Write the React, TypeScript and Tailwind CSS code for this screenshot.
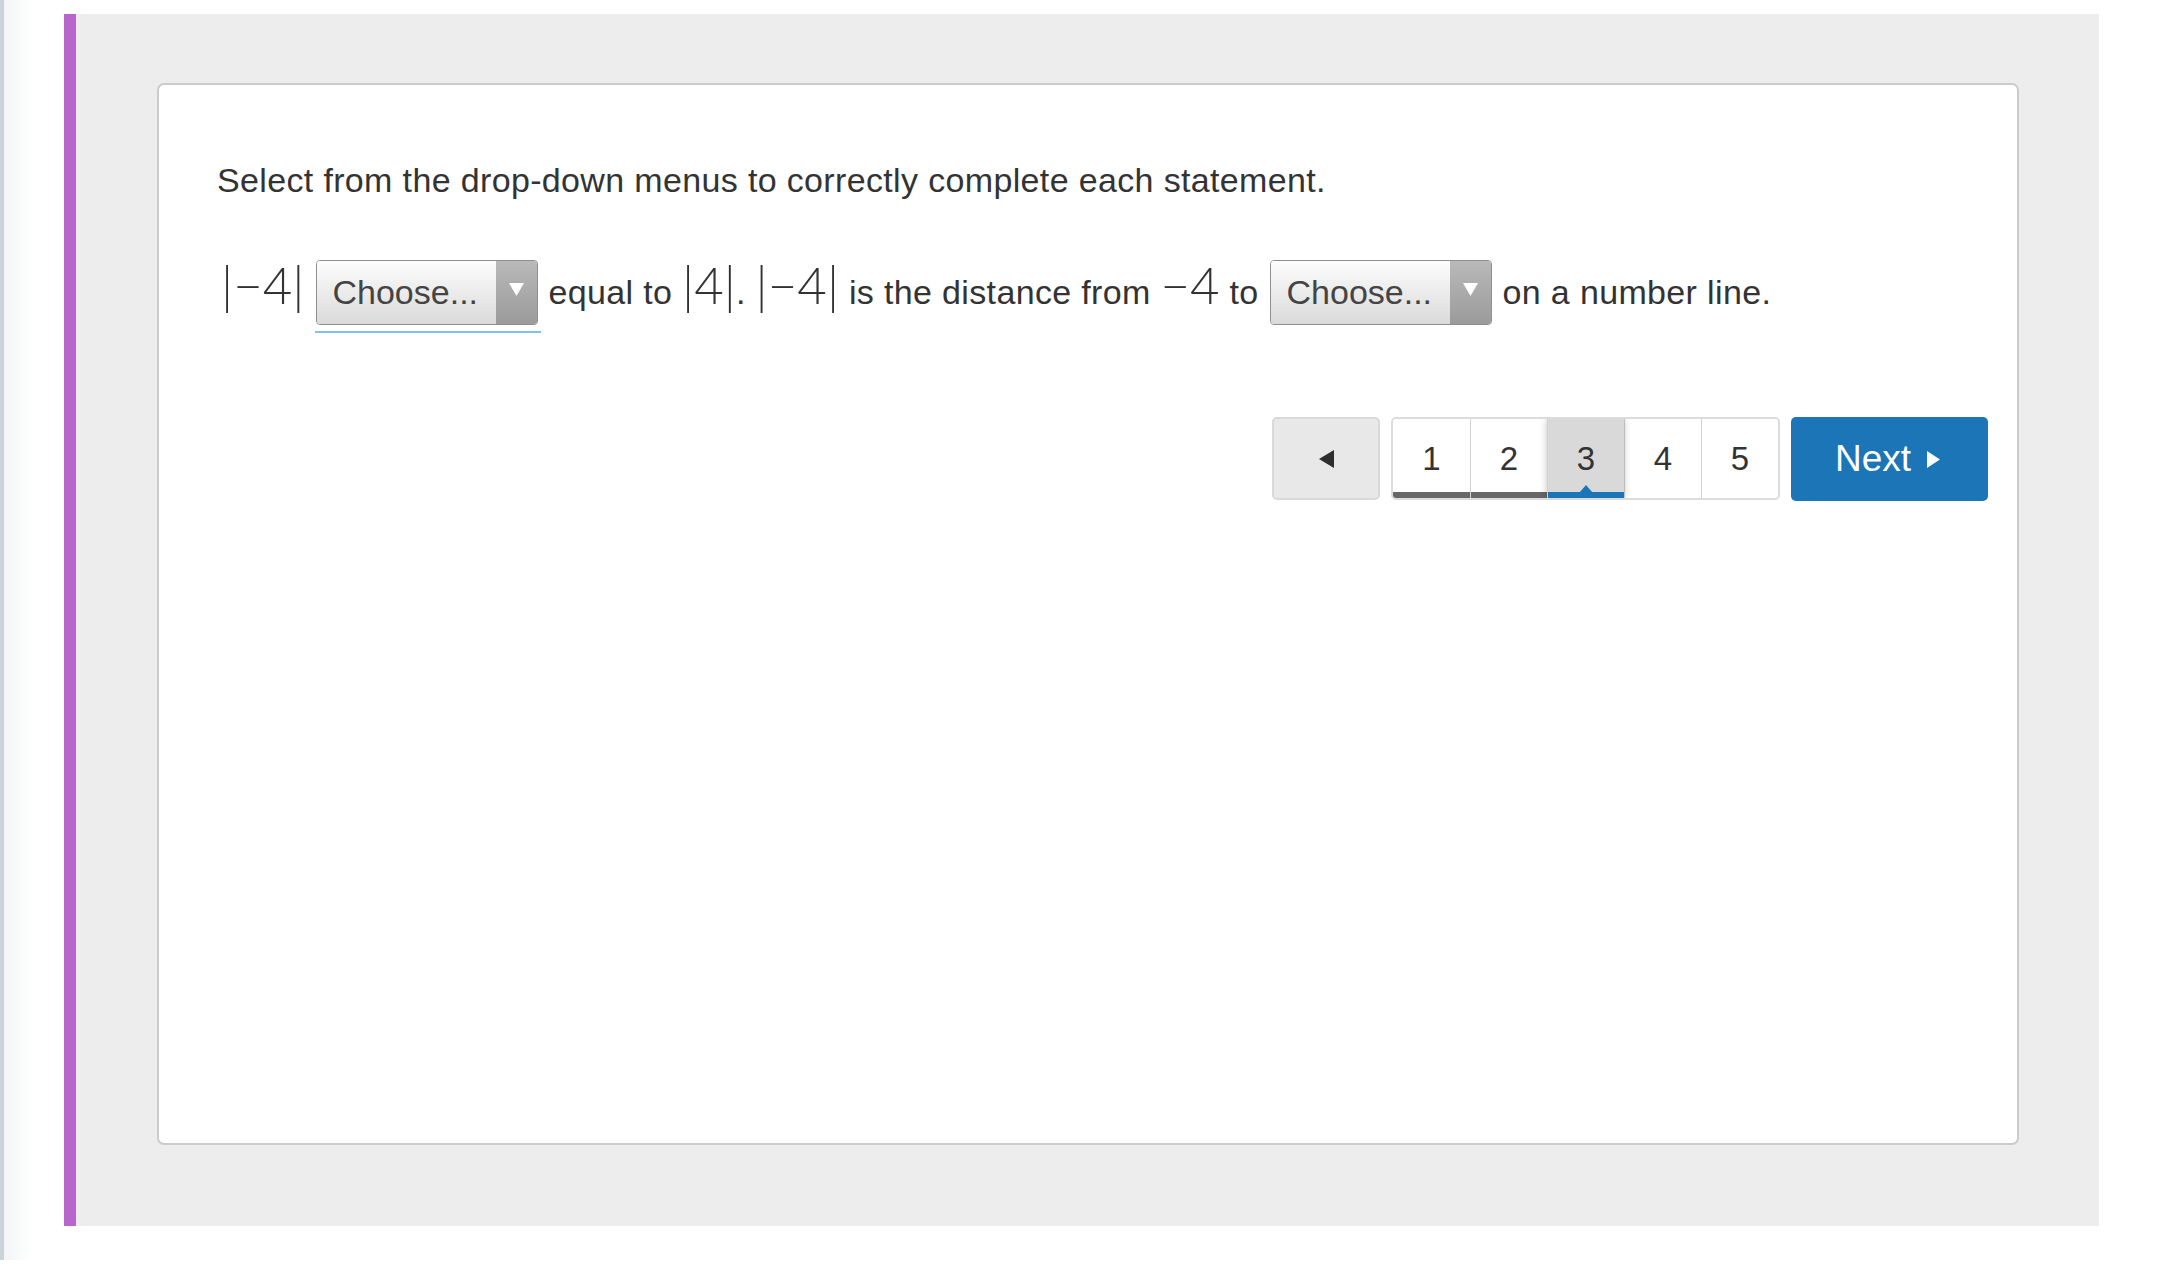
import React from "react";

function Dropdown({ underline = false }: { underline?: boolean }) {
  return (
    <span className="relative inline-flex h-[65px] w-[222px] items-stretch rounded-[4px] border border-[#8f8f8f] overflow-visible tracking-normal">
      <span className="flex flex-1 items-center rounded-l-[3px] bg-gradient-to-b from-[#fdfdfd] to-[#dadada] pl-[16px] text-[34px] leading-[1.15] text-[#444]">
        Choose...
      </span>
      <span className="flex w-[41px] items-start justify-center rounded-r-[3px] bg-gradient-to-b from-[#b9b9b9] to-[#9b9b9b] pt-[22px]">
        <svg width="15" height="13" viewBox="0 0 15 13">
          <polygon points="0,0 15,0 7.5,13" fill="#ffffff" />
        </svg>
      </span>
      {underline && (
        <span className="absolute left-[-2px] right-[-4px] bottom-[-9px] h-[2px] bg-[#80c2ec]" />
      )}
    </span>
  );
}

function M({ children }: { children: React.ReactNode }) {
  return (
    <span className="font-['Lato','Liberation_Sans',sans-serif] text-[51px] font-light leading-none tracking-normal text-[#333]">
      {children}
    </span>
  );
}

export default function App() {
  return (
    <div className="flex h-[1286px] w-[2160px] bg-white font-['Liberation_Sans',Arial,sans-serif] text-[#333]">
      <div className="h-[1260px] w-[4px] bg-[#cbd2da]" />
      <div className="h-[1260px] w-[28px] bg-gradient-to-r from-[#f2f4f6] to-white" />
      <div className="w-[32px]" />
      <div className="mt-[14px] h-[1212px] w-[2035px] border-l-[12px] border-[#b866cc] bg-[#ededed] pl-[81px] pt-[69px]">
        <div className="h-[1062px] w-[1862px] rounded-[7px] border-2 border-[#cbcbcb] bg-white pl-[58px] pr-[29px] pt-[76px]">
          <p className="text-[34px] leading-[1.15] tracking-[0.35px]">
            Select from the drop-down menus to correctly complete each statement.
          </p>

          <div className="mt-[59px] flex items-baseline whitespace-nowrap text-[34px] leading-[1.15] tracking-[0.35px]">
            <span className="ml-[4px]">
              <M>|−4|</M>
            </span>
            <span className="ml-[11px] mr-[11px]">
              <Dropdown underline />
            </span>
            <span>
              equal to <M>|4|</M>. <M>|−4|</M> is the distance from <M>−4</M> to
            </span>
            <span className="ml-[11px] mr-[11px]">
              <Dropdown />
            </span>
            <span>on a number line.</span>
          </div>

          <div className="mt-[92px] flex justify-end gap-[11px]">
            <button className="flex h-[83px] w-[108px] items-center justify-center rounded-[5px] border-2 border-[#d9d9d9] bg-[#e8e8e8]">
              <svg width="15" height="18" viewBox="0 0 15 18">
                <polygon points="15,0 15,18 0,9" fill="#2e2e2e" />
              </svg>
            </button>

            <div className="flex h-[83px] overflow-hidden rounded-[5px] border-2 border-[#dcdcdc] bg-white">
              {[1, 2, 3, 4, 5].map((n, i) => {
                const active = n === 3;
                const bar = n === 3 ? "bg-[#1c75b8]" : n < 3 ? "bg-[#676767]" : "bg-transparent";
                return (
                  <div
                    key={n}
                    className={
                      "relative flex w-[77px] flex-col " +
                      (i > 0 ? "border-l border-[#d2d2d2] " : "") +
                      (active ? "z-10 bg-[#d9d9d9] shadow-[0_0_7px_rgba(0,0,0,0.25)]" : "bg-white")
                    }
                  >
                    <div className="flex flex-1 items-center justify-center pt-[7px] text-[33px] text-[#333]">
                      {n}
                    </div>
                    <div className={"h-[6px] " + bar} />
                    {active && (
                      <svg
                        className="absolute bottom-[5px] left-1/2 -translate-x-1/2"
                        width="14"
                        height="8"
                        viewBox="0 0 14 8"
                      >
                        <polygon points="0,8 14,8 7,0" fill="#1c75b8" />
                      </svg>
                    )}
                  </div>
                );
              })}
            </div>

            <button className="flex h-[84px] w-[197px] items-center justify-center gap-[16px] rounded-[5px] bg-[#1b75b6] pr-[4px] text-[37px] text-white">
              <span>Next</span>
              <svg width="13" height="17" viewBox="0 0 13 17">
                <polygon points="0,0 13,8.5 0,17" fill="#ffffff" />
              </svg>
            </button>
          </div>
        </div>
      </div>
    </div>
  );
}
